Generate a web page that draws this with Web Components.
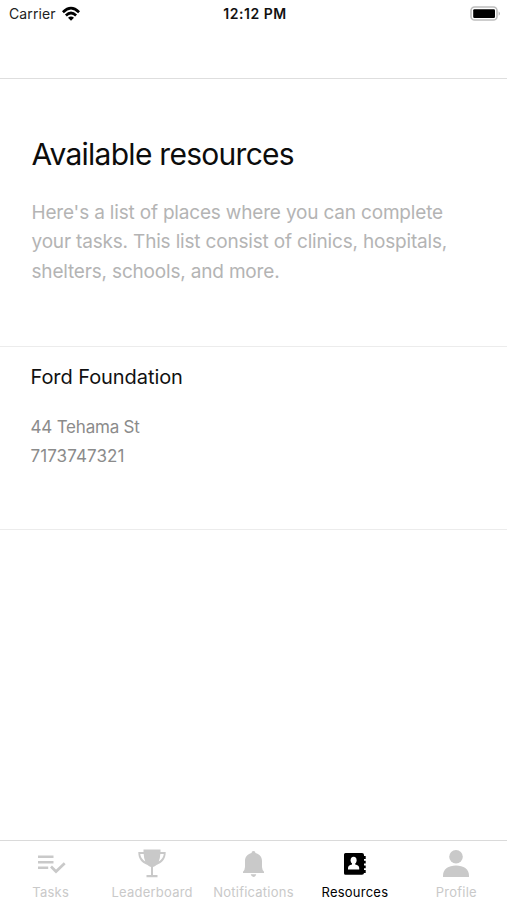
<!DOCTYPE html>
<html lang="en">
<head>
<meta charset="utf-8">
<title>Available resources</title>
<style>
html,body{margin:0;height:100%;background:#fff}
body{font-family:Inter,"Liberation Sans",sans-serif;overflow:hidden}
</style>
</head>
<body>
<resources-app></resources-app>
<script>
const define = (name, html) => customElements.define(name, class extends HTMLElement {
  constructor() {
    super();
    this.attachShadow({mode: 'open'}).innerHTML = html;
  }
});

define('status-bar', `<style>
:host{display:grid;grid-template-columns:1fr auto 1fr;align-items:center;height:28px;box-sizing:border-box;padding:0 6px 0 9px;color:#222;font-size:14px;line-height:28px;white-space:nowrap}
.left{display:flex;align-items:center;gap:6px}
.carrier{letter-spacing:.1px}
.time{font-weight:600;color:#111;letter-spacing:.55px}
.right{display:flex;justify-content:flex-end}
svg{display:block}
</style>
<div class="left"><span class="carrier">Carrier</span>
<svg width="18" height="16" viewBox="0 0 18 16" fill="none" stroke="#000" stroke-width="2.7"><path d="M.9 6.2Q9-1.9 17.1 6.2"/><path d="M3.9 9.4Q9 4.6 14.1 9.4"/><path d="M9 14.8 6 11.8Q9 9 12 11.8Z" fill="#000" stroke="none"/></svg></div>
<span class="time">12:12 PM</span>
<div class="right"><svg width="31" height="16" viewBox="0 0 31 16"><rect x="1" y="1" width="26" height="13" rx="3.6" fill="#fff" stroke="#bdbdbd" stroke-width="1.6"/><rect x="3.2" y="3.2" width="21.8" height="8.8" rx="1.2" fill="#000"/><path d="M28.7 5.2Q31 7.5 28.7 9.8Z" fill="#aaa"/></svg></div>`);

define('nav-header', `<style>:host{display:block;height:51px;box-sizing:border-box;border-bottom:1px solid #dedede}</style>`);

define('page-intro', `<style>
:host{display:block;height:268px;box-sizing:border-box;padding:56px 31.5px 0;border-bottom:1px solid #ececec}
h1{margin:0;font-size:30px;line-height:38px;font-weight:400;color:#0c0c0c;letter-spacing:-.73px}
p{margin:25px 0 0;font-size:19px;line-height:29.3px;color:#b4b4b4;white-space:nowrap;letter-spacing:-.18px}
</style><h1><slot name="title"></slot></h1><p><slot></slot></p>`);

define('resource-card', `<style>
:host{display:block;height:183px;box-sizing:border-box;padding:17px 30.5px 0;border-bottom:1px solid #ececec}
h2{margin:0;font-size:20px;line-height:26px;font-weight:400;color:#111;letter-spacing:-.07px}
p{margin:0;font-size:17px;line-height:29.3px;color:#8b8b8b}
.details{margin-top:23px}
.address{letter-spacing:-.2px}
.phone{letter-spacing:.08px}
</style><h2><slot name="name"></slot></h2><div class="details"><p class="address"><slot name="address"></slot></p><p class="phone"><slot name="phone"></slot></p></div>`);

define('tab-item', `<style>
:host{display:flex;flex-direction:column;align-items:center;color:#c9c9c9;font-size:13px;line-height:16px;letter-spacing:.23px;white-space:nowrap;padding-top:7px}
:host([active]){color:#000}
.icon{height:36px}
::slotted(svg){display:block}
</style><div class="icon"><slot name="icon"></slot></div><span><slot></slot></span>`);

define('tab-bar', `<style>
:host{display:grid;grid-template-columns:repeat(5,1fr);height:60px;box-sizing:border-box;border-top:1px solid #dadada}
</style>
<tab-item><svg slot="icon" width="32" height="34" viewBox="0 0 32 34"><path d="M3 8.8H18.5M3 14.3H18.5M3 19.8H13.2" fill="none" stroke="currentColor" stroke-width="2.5"/><path d="M16 18.5 21 23.5 29.7 15.3" fill="none" stroke="currentColor" stroke-width="2.7"/></svg><label>Tasks</label></tab-item>
<tab-item><svg slot="icon" width="32" height="34" viewBox="0 0 32 34"><path d="M7.5 1.5H24.5V4H29.7C29.7 11 26.5 14.5 20.5 17Q18.8 18.7 17 19.1V27H21.5V29.3H10.5V27H15V19.1Q13.2 18.7 11.5 17C5.5 14.5 2.3 11 2.3 4H7.5ZM7.7 6H4.2Q4.8 11 9.3 13.5Q7.8 10 7.7 6ZM24.3 6Q24.2 10 22.7 13.5Q27.2 11 27.8 6Z" fill="currentColor" fill-rule="evenodd"/></svg><label>Leaderboard</label></tab-item>
<tab-item><svg slot="icon" width="32" height="34" viewBox="0 0 32 34"><path d="M16.5 3C17.8 3 18.4 3.8 18.4 5C22.8 6 25 9.2 25 13V19Q25.1 21.8 27 23.8V25H6V23.8Q7.9 21.8 8 19V13C8 9.2 10.2 6 14.6 5C14.6 3.8 15.2 3 16.5 3ZM13.7 26.3H19.3Q18.6 29 16.5 29T13.7 26.3Z" fill="currentColor"/></svg><label>Notifications</label></tab-item>
<tab-item active><svg slot="icon" width="32" height="34" viewBox="0 0 32 34"><path d="M6.5 5H23Q25 5 25 7V8H26.7V11H25V12.7H26.7V15.5H25V17.5H26.7V20.3H25V22H26.7V25H25Q25 26.8 23 26.8H6.5Q5 26.8 5 25.3V6.5Q5 5 6.5 5Z" fill="currentColor"/><ellipse cx="14.6" cy="12.2" rx="3" ry="3.5" fill="#fff"/><path d="M13 14H16.2V16.5Q20.2 17.2 20.2 20V21.5H9V20Q9 17.2 13 16.5Z" fill="#fff"/></svg><label>Resources</label></tab-item>
<tab-item><svg slot="icon" width="32" height="34" viewBox="0 0 32 34"><circle cx="16" cy="8.7" r="6.8" fill="currentColor"/><path d="M3 29V27.5C3 21 8.5 17.4 16 17.4S29 21 29 27.5V29Z" fill="currentColor"/></svg><label>Profile</label></tab-item>`);

define('resources-app', `<style>
:host{display:flex;flex-direction:column;width:100%;height:900px;background:#fff}
main{flex:1}
</style>
<status-bar></status-bar><nav-header></nav-header>
<main><page-intro><span slot="title">Available resources</span>Here's a list of places where you can complete<br>your tasks. This list consist of clinics, hospitals,<br>shelters, schools, and more.</page-intro>
<resource-card><span slot="name">Ford Foundation</span><span slot="address">44 Tehama St</span><span slot="phone">7173747321</span></resource-card></main>
<tab-bar></tab-bar>`);
</script>
</body>
</html>
